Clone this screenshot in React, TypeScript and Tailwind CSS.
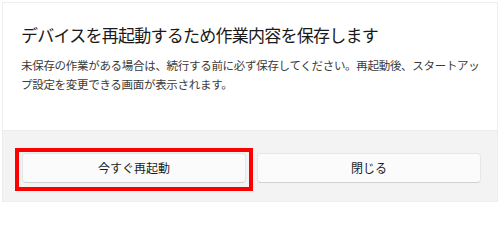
import React from "react";

const App: React.FC = () => {
  return (
    <div
      className="w-[500px] h-[203px] bg-white pt-[2px] pl-[2px] overflow-hidden"
      style={{ fontFamily: '"Noto Sans CJK JP", "Noto Sans", sans-serif' }}
    >
      <div className="w-[496px] h-[200px] border border-[#eeeeee] flex flex-col bg-white">
        {/* Body */}
        <div className="h-[127px] pl-[18px] pr-[12px] pt-[20px]">
          <h2 className="text-[17px] leading-[24px] tracking-[-0.75px] text-[#1a1a1a] font-normal">
            デバイスを再起動するため作業内容を保存します
          </h2>
          <p className="mt-[9px] text-[11.5px] leading-[19px] tracking-[-0.3px] text-[#3b3b3b]">
            未保存の作業がある場合は、続行する前に必ず保存してください。再起動後、スタートアッ
            <br />
            プ設定を変更できる画面が表示されます。
          </p>
        </div>

        {/* Footer */}
        <div className="flex-1 bg-[#f3f3f3] border-t border-[#ececec] flex items-start gap-[11px] pl-[19px] pt-[22px]">
          <div className="relative">
            <button className="block w-[224px] h-[30px] rounded-[4px] bg-[#fbfbfb] border border-[#e6e6e6] border-b-[#d0d0d0] text-[12px] text-[#1b1b1b]">
              今すぐ再起動
            </button>
            <span className="absolute -left-[7px] -top-[5px] -right-[7px] -bottom-[8px] border-[4px] border-[#ff0000] pointer-events-none" />
          </div>
          <button className="block w-[224px] h-[30px] rounded-[4px] bg-[#fbfbfb] border border-[#e6e6e6] border-b-[#d0d0d0] text-[12px] text-[#1b1b1b]">
            閉じる
          </button>
        </div>
      </div>
    </div>
  );
};

export default App;
